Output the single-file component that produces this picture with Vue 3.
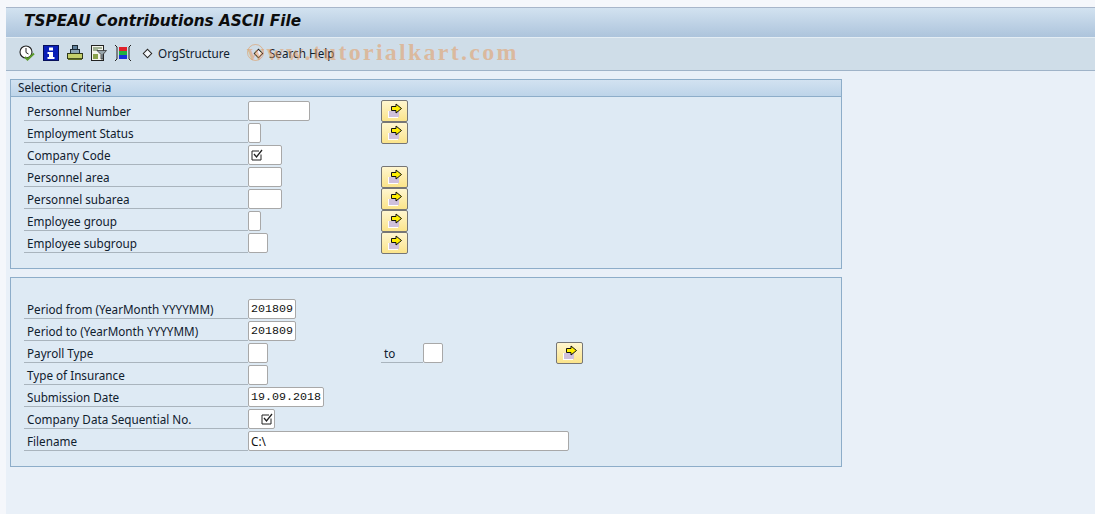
<template>
  <div class="screen">
    <header class="title-bar">
      <h1>TSPEAU Contributions ASCII File</h1>
    </header>
    <div class="toolbar">
      <div class="icons">
        <svg width="16" height="16" viewBox="0 0 16 16">
          <circle cx="7" cy="7" r="6" fill="#fff" stroke="#222" stroke-width="1.100" />
          <path d="M7 3v4.500l2.500 1.500" fill="none" stroke="#222" />
          <path d="M6 12l2.500 2.500L15 8.500" fill="none" stroke="#5a9a2a" stroke-width="2" />
        </svg>
        <svg width="16" height="16" viewBox="0 0 16 16">
          <rect x="0.500" y="0.500" width="15" height="15" fill="#0a1fb8" stroke="#07105a" />
          <rect x="6" y="2.500" width="4" height="3" fill="#fff" />
          <path d="M4.500 7H10v5h1.500v2h-7v-2H6V9H4.500z" fill="#fff" />
        </svg>
        <svg width="16" height="16" viewBox="0 0 16 16">
          <rect x="5.500" y="0.500" width="5" height="4" fill="#5f7f9a" stroke="#1c2a33" />
          <rect x="3.500" y="4.500" width="9" height="4" fill="#8aa3b5" stroke="#1c2a33" />
          <rect x="0.500" y="8.500" width="15" height="5" fill="#c4cf6a" stroke="#30381a" />
          <rect x="1" y="13.500" width="14" height="1.500" fill="#5e6b25" />
        </svg>
        <svg width="16" height="16" viewBox="0 0 16 16">
          <rect x="0.500" y="0.500" width="12" height="15" fill="#f4f4ec" stroke="#222" />
          <path d="M2 3h9M2 5h5" stroke="#4f6d3a" stroke-width="1.200" />
          <rect x="2" y="9" width="5" height="5" fill="#8aa24a" />
          <path d="M6 5.500h9.500l-3.500 4V14h-2V9.500z" fill="#9aa7ad" stroke="#333" stroke-width=".8" />
        </svg>
        <svg width="16" height="16" viewBox="0 0 16 16">
          <rect x="4" y="2" width="8" height="4" fill="#e0202a" />
          <rect x="4" y="6" width="8" height="4" fill="#20b040" />
          <rect x="4" y="10" width="8" height="4" fill="#1830d8" />
          <path d="M0 0l2 2v12l-2 2M16 0l-2 2v12l2 2" fill="none" stroke="#222" />
        </svg>
      </div>
      <button class="tool-btn org">
        <span class="diamond"></span>OrgStructure
      </button>
      <button class="tool-btn search">
        <span class="diamond"></span>Search Help
      </button>
      <div class="watermark"><span class="ring"></span>www.tutorialkart.com</div>
    </div>

    <main class="content">
      <section class="group first">
        <div class="group-head">Selection Criteria</div>
        <div class="rows">
          <div v-for="row in selection" :key="row.label" class="row">
            <label>{{ row.label }}</label>
            <div class="field" :style="{ width: row.width + 'px' }">
              <svg v-if="row.checked" class="check" width="12" height="12" viewBox="0 0 12 12">
                <path d="M10 5.500V11H1V2h7" fill="none" stroke="#222" />
                <path d="M3 5l2.500 3L11 1" fill="none" stroke="#222" stroke-width="1.300" />
              </svg>
            </div>
            <div class="extra">
              <button v-if="row.more" class="more">
                <svg width="16" height="16" viewBox="0 0 16 16">
                  <rect x="1" y="8" width="10" height="7" fill="#fff" />
                  <rect x="2" y="8" width="10" height="6" fill="#cfc0dc" />
                  <path d="M4.500 3.500H9V1l5.500 4.500L9 10V7.500H4.500z" fill="#ffee00" stroke="#111" />
                </svg>
              </button>
            </div>
          </div>
        </div>
      </section>

      <section class="group second">
        <div class="rows">
          <div v-for="row in period" :key="row.label" class="row">
            <label>{{ row.label }}</label>
            <div class="field" :class="{ indented: row.indented, plain: row.plain }" :style="{ width: row.width + 'px' }">
              <svg v-if="row.checked" class="check" width="12" height="12" viewBox="0 0 12 12">
                <path d="M10 5.500V11H1V2h7" fill="none" stroke="#222" />
                <path d="M3 5l2.500 3L11 1" fill="none" stroke="#222" stroke-width="1.300" />
              </svg>
              {{ row.value }}
            </div>
            <div v-if="row.range" class="extra range">
              <span class="to">to</span>
              <div class="field" style="width: 20px"></div>
              <button class="more">
                <svg width="16" height="16" viewBox="0 0 16 16">
                  <rect x="1" y="8" width="10" height="7" fill="#fff" />
                  <rect x="2" y="8" width="10" height="6" fill="#cfc0dc" />
                  <path d="M4.500 3.500H9V1l5.500 4.500L9 10V7.500H4.500z" fill="#ffee00" stroke="#111" />
                </svg>
              </button>
            </div>
          </div>
        </div>
      </section>
    </main>
  </div>
</template>

<script setup>
const selection = [
  { label: 'Personnel Number', width: 62, more: true },
  { label: 'Employment Status', width: 13, more: true },
  { label: 'Company Code', width: 34, checked: true },
  { label: 'Personnel area', width: 34, more: true },
  { label: 'Personnel subarea', width: 34, more: true },
  { label: 'Employee group', width: 13, more: true },
  { label: 'Employee subgroup', width: 20, more: true },
]

const period = [
  { label: 'Period from (YearMonth YYYYMM)', width: 48, value: '201809' },
  { label: 'Period to (YearMonth YYYYMM)', width: 48, value: '201809' },
  { label: 'Payroll Type', width: 20, range: true },
  { label: 'Type of Insurance', width: 20 },
  { label: 'Submission Date', width: 76, value: '19.09.2018' },
  { label: 'Company Data Sequential No.', width: 27, checked: true, indented: true },
  { label: 'Filename', width: 321, value: 'C:\\', plain: true },
]
</script>

<style>
html, body {
  margin: 0;
  background: #f5f7fb;
  overflow: hidden;
}
</style>

<style scoped>
.screen {
  width: 1089px;
  height: 507px;
  margin: 7px 0 0 6px;
  background: #e9f0f8;
  font-family: "Noto Sans", sans-serif;
  font-size: 11.7px;
  color: #10202e;
}
.title-bar {
  box-sizing: border-box;
  height: 30px;
  padding-bottom: 3px;
  border-top: 1px solid #a8b6ca;
  background: linear-gradient(#d2e2f0, #adc4dc);
  display: flex;
  align-items: center;
}
.title-bar h1 {
  margin: 0 0 0 18px;
  font-family: "DejaVu Sans", sans-serif;
  font-size: 15.3px;
  font-weight: bold;
  font-style: italic;
  color: #0c0c0c;
}
.toolbar {
  position: relative;
  box-sizing: border-box;
  height: 34px;
  padding-bottom: 2px;
  border-top: 1px solid #e4edf4;
  border-bottom: 1px solid #9fb3c8;
  background: #cfdde8;
  display: flex;
  align-items: center;
}
.icons {
  display: flex;
  gap: 8px;
  margin-left: 13px;
}
.tool-btn {
  display: flex;
  align-items: center;
  gap: 7px;
  padding: 0;
  border: 0;
  background: none;
  font: inherit;
  color: inherit;
}
.org {
  margin-left: 13px;
}
.search {
  margin-left: 25px;
}
.diamond {
  width: 5px;
  height: 5px;
  border: 1px solid #222;
  background: #f4f7fa;
  transform: rotate(45deg);
}
.watermark {
  position: absolute;
  left: 241px;
  top: -1px;
  font-family: "Liberation Serif", serif;
  font-size: 24px;
  font-weight: bold;
  letter-spacing: 2.25px;
  line-height: 30px;
  color: rgba(230, 150, 85, 0.5);
  white-space: nowrap;
}
.ring {
  position: absolute;
  left: 0;
  top: 7px;
  width: 15px;
  height: 15px;
  border: 1px solid rgba(226, 142, 70, 0.5);
  border-radius: 50%;
}
.content {
  padding: 8px 0 0 4px;
}
.group {
  box-sizing: border-box;
  width: 832px;
  height: 190px;
  border: 1px solid #8dadc9;
  background: #deeaf4;
}
.second {
  margin-top: 8px;
}
.group-head {
  height: 16px;
  padding-left: 7px;
  border-bottom: 1px solid #8dadc9;
  background: linear-gradient(#d2e2f1, #bdd4e9);
  line-height: 15px;
}
.first .rows {
  padding-top: 4px;
}
.second .rows {
  padding-top: 21px;
}
.row {
  display: grid;
  grid-template-columns: 224px 133px auto;
  height: 22px;
  margin-left: 13px;
}
.row label {
  height: 20px;
  padding-left: 3px;
  box-sizing: border-box;
  border-bottom: 1px solid #a9b4bd;
  line-height: 21px;
  white-space: nowrap;
}
.field {
  position: relative;
  height: 20px;
  box-sizing: border-box;
  padding-left: 2px;
  border: 1px solid #a8a8a8;
  border-radius: 2px;
  background: #fff;
  font-family: "Liberation Mono", monospace;
  font-size: 11.67px;
  line-height: 19px;
  color: #111;
  white-space: nowrap;
}
.plain {
  font-family: "Noto Sans", sans-serif;
  font-size: 11.7px;
}
.row > .field {
  grid-column: 2;
  justify-self: start;
}
.check {
  position: absolute;
  left: 2px;
  top: 3px;
}
.indented .check {
  left: 12px;
}
.extra {
  grid-column: 3;
}
.range {
  display: flex;
  width: 202px;
}
.to {
  box-sizing: border-box;
  width: 42px;
  height: 20px;
  padding-left: 3px;
  border-bottom: 1px solid #a9b4bd;
  line-height: 21px;
}
.more {
  display: flex;
  align-items: center;
  justify-content: center;
  width: 27px;
  height: 22px;
  margin-top: -1px;
  padding: 0;
  border: 1px solid #767676;
  border-radius: 2px;
  background: linear-gradient(#fff6d0, #fbe48a);
}
.range .more {
  margin-left: 113px;
}
</style>
